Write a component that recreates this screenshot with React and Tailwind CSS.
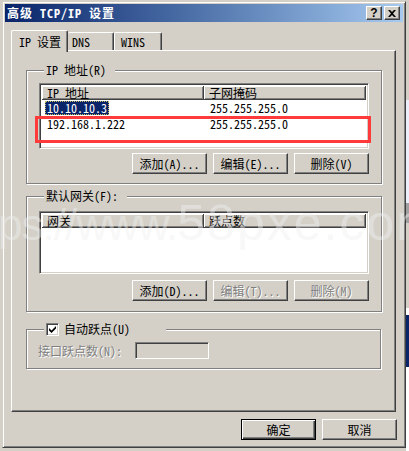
import React from 'react';

const raised =
  'border border-t-white border-l-white border-r-[#404040] border-b-[#404040] shadow-[inset_-1px_-1px_0_#808080]';
const sunken =
  'border border-t-[#808080] border-l-[#808080] border-r-white border-b-white shadow-[inset_1px_1px_0_#404040,inset_-1px_-1px_0_#d4d0c8]';
const etched = 'border border-[#808080] shadow-[1px_1px_0_#fff,inset_1px_1px_0_#fff]';
const disabledText = 'text-[#808080] [text-shadow:1px_1px_0_#fff]';

function Btn({ children, disabled, isDefault }) {
  return (
    <div
      className={`w-[75px] h-[21px] flex items-center justify-center bg-[#d4d0c8] ${
        isDefault
          ? 'border border-black shadow-[inset_1px_1px_0_#fff,inset_-1px_-1px_0_#404040,inset_-2px_-2px_0_#808080]'
          : raised
      } ${disabled ? disabledText : 'text-black'}`}
    >
      {children}
    </div>
  );
}

function Header({ a, b }) {
  return (
    <div className="flex h-[14px] shrink-0">
      <div className="w-[162px] pl-[5px] flex items-center border-r border-b border-r-[#404040] border-b-[#404040] shadow-[inset_1px_1px_0_#fff,inset_-1px_-1px_0_#808080]">
        {a}
      </div>
      <div className="flex-1 pl-[5px] flex items-center border-r border-b border-r-[#404040] border-b-[#404040] shadow-[inset_1px_1px_0_#fff,inset_-1px_-1px_0_#808080]">
        {b}
      </div>
    </div>
  );
}

function Row({ ip, mask, selected }) {
  return (
    <div className="flex h-[16px] items-center">
      <div className="w-[162px] pl-[3px]">
        {selected ? (
          <span className="inline-block bg-[#0a246a] text-white px-[2px] leading-[14px] outline-1 outline-dotted outline-[#c8c060] -outline-offset-1">
            {ip}
          </span>
        ) : (
          <span className="px-[2px]">{ip}</span>
        )}
      </div>
      <div className="flex-1 pl-[6px]">{mask}</div>
    </div>
  );
}

export default function App() {
  return (
    <div className="relative w-[409px] h-[451px] overflow-hidden bg-[#d4d0c8] flex text-[12px] leading-[14px] text-black font-['Noto_Sans_Mono_CJK_SC','Noto_Sans_CJK_SC',monospace]">
      <div className="w-[2px] shrink-0" />

      {/* dialog */}
      <div className="mt-[1px] w-[404px] h-[447px] shrink-0 flex flex-col p-[2px] border border-t-[#d4d0c8] border-l-[#d4d0c8] border-r-[#404040] border-b-[#404040] shadow-[inset_1px_1px_0_#fff,inset_-1px_-1px_0_#808080]">
        {/* title bar */}
        <div className="h-[18px] shrink-0 flex items-center pl-[2px] pr-[3px] bg-linear-to-r from-[#0a246a] to-[#a6caf0]">
          <span className="flex-1 text-white font-bold tracking-[1px]">高级 TCP/IP 设置</span>
          <div className={`w-[16px] h-[14px] flex items-center justify-center bg-[#d4d0c8] ${raised}`}>
            <span className="font-['Liberation_Sans',sans-serif] font-bold text-[12px] leading-[12px] -mt-[1px]">?</span>
          </div>
          <div className={`ml-[2px] w-[16px] h-[14px] flex items-center justify-center bg-[#d4d0c8] ${raised}`}>
            <svg width="8" height="7" viewBox="0 0 8 7">
              <path d="M0 0H2L4 2L6 0H8L5 3.5L8 7H6L4 5L2 7H0L3 3.5Z" fill="#000" />
            </svg>
          </div>
        </div>

        {/* client */}
        <div className="flex-1 flex flex-col pl-[6px] pt-[8px]">
          {/* tabs */}
          <div className="h-[20px] flex items-end">
            <div className="relative z-10 -mb-[2px] w-[57px] h-[22px] pl-[7px] pt-[4px] bg-[#d4d0c8] border-l border-t border-r border-l-white border-t-white border-r-[#404040] rounded-t-[2px] shadow-[inset_-1px_0_0_#808080]">
              IP 设置
            </div>
            <div className="w-[46px] h-[18px] pl-[4px] pt-[2px] border-t border-r border-t-white border-r-[#404040] rounded-t-[2px] shadow-[inset_-1px_0_0_#808080]">
              DNS
            </div>
            <div className="w-[48px] h-[18px] pl-[6px] pt-[2px] border-l border-t border-r border-l-white border-t-white border-r-[#404040] rounded-t-[2px] shadow-[inset_-1px_0_0_#808080]">
              WINS
            </div>
          </div>

          {/* panel */}
          <div className={`w-[385px] h-[362px] flex flex-col pl-[14px] pt-[12px] ${raised}`}>
            {/* IP addresses */}
            <fieldset className={`w-[355px] h-[121px] px-[12px] ${etched}`}>
              <legend className="ml-[5px] pl-[2px] pr-[9px] leading-[14px] bg-[#d4d0c8]">IP 地址(R)</legend>
              <div className={`mt-[6px] w-[330px] h-[66px] bg-white p-[2px] flex flex-col ${sunken}`}>
                <div className="bg-[#d4d0c8]">
                  <Header a="IP 地址" b="子网掩码" />
                </div>
                <Row ip="10.10.10.3" mask="255.255.255.0" selected />
                <Row ip="192.168.1.222" mask="255.255.255.0" />
              </div>
              <div className="mt-[4px] w-[330px] flex justify-end gap-[6px]">
                <Btn>添加(A)...</Btn>
                <Btn>编辑(E)...</Btn>
                <Btn>删除(V)</Btn>
              </div>
            </fieldset>

            {/* gateways */}
            <fieldset className={`mt-[5px] w-[355px] h-[123px] px-[12px] ${etched}`}>
              <legend className="ml-[5px] pl-[2px] pr-[9px] leading-[14px] bg-[#d4d0c8]">默认网关(F):</legend>
              <div className={`mt-[8px] w-[330px] h-[63px] bg-white p-[2px] flex flex-col ${sunken}`}>
                <div className="bg-[#d4d0c8]">
                  <Header a="网关" b="跃点数" />
                </div>
              </div>
              <div className="mt-[6px] w-[330px] flex justify-end gap-[6px]">
                <Btn>添加(D)...</Btn>
                <Btn disabled>编辑(T)...</Btn>
                <Btn disabled>删除(M)</Btn>
              </div>
            </fieldset>

            {/* metric */}
            <fieldset className={`mt-[10px] w-[355px] h-[47px] px-[11px] ${etched}`}>
              <legend className="ml-[6px] pl-[2px] pr-[36px] leading-[14px] bg-[#d4d0c8]">
                <span className="flex items-center">
                  <span className={`w-[13px] h-[13px] bg-white flex items-center justify-center ${sunken}`}>
                    <svg width="7" height="7" viewBox="0 0 7 7">
                      <path d="M0 2L2.5 4.5L7 0V2.5L2.5 7L0 4.5Z" fill="#000" />
                    </svg>
                  </span>
                  <span className="ml-[5px]">自动跃点(U)</span>
                </span>
              </legend>
              <div className="mt-[6px] flex items-center">
                <span className={`w-[97px] ${disabledText}`}>接口跃点数(N):</span>
                <div className={`w-[74px] h-[17px] bg-[#d4d0c8] ${sunken}`} />
              </div>
            </fieldset>
          </div>

          {/* OK / Cancel */}
          <div className="mt-[7px] flex justify-end gap-[6px] pr-[6px]">
            <Btn isDefault>确定</Btn>
            <Btn>取消</Btn>
          </div>
        </div>
      </div>

      {/* desktop behind, right edge */}
      <div className="w-[3px] shrink-0 flex flex-col">
        <div className="h-[100px] bg-[#d4d0c8]" />
        <div className="h-[103px] bg-[#eaeef8]" />
        <div className="h-[20px] bg-[#a0a0a0]" />
        <div className="h-[85px] bg-[#d4d0c8]" />
        <div className="h-[7px] bg-white" />
        <div className="h-[52px] bg-[#0a246a]" />
        <div className="flex-1 bg-white" />
      </div>

      {/* annotation */}
      <div className="absolute left-[35px] top-[116px] w-[336px] h-[27px] border-[3px] border-[#ff3a3a] pointer-events-none" />

      {/* watermark */}
      <div className="absolute left-[-2px] top-[198px] whitespace-nowrap pointer-events-none font-['Liberation_Sans',sans-serif] leading-[50px] text-[rgba(240,240,240,0.45)]">
        <span className="text-[44px] tracking-[-1px]">ps://www.</span>
        <span className="text-[50px] tracking-[2px]">58pxe.com</span>
      </div>
    </div>
  );
}
